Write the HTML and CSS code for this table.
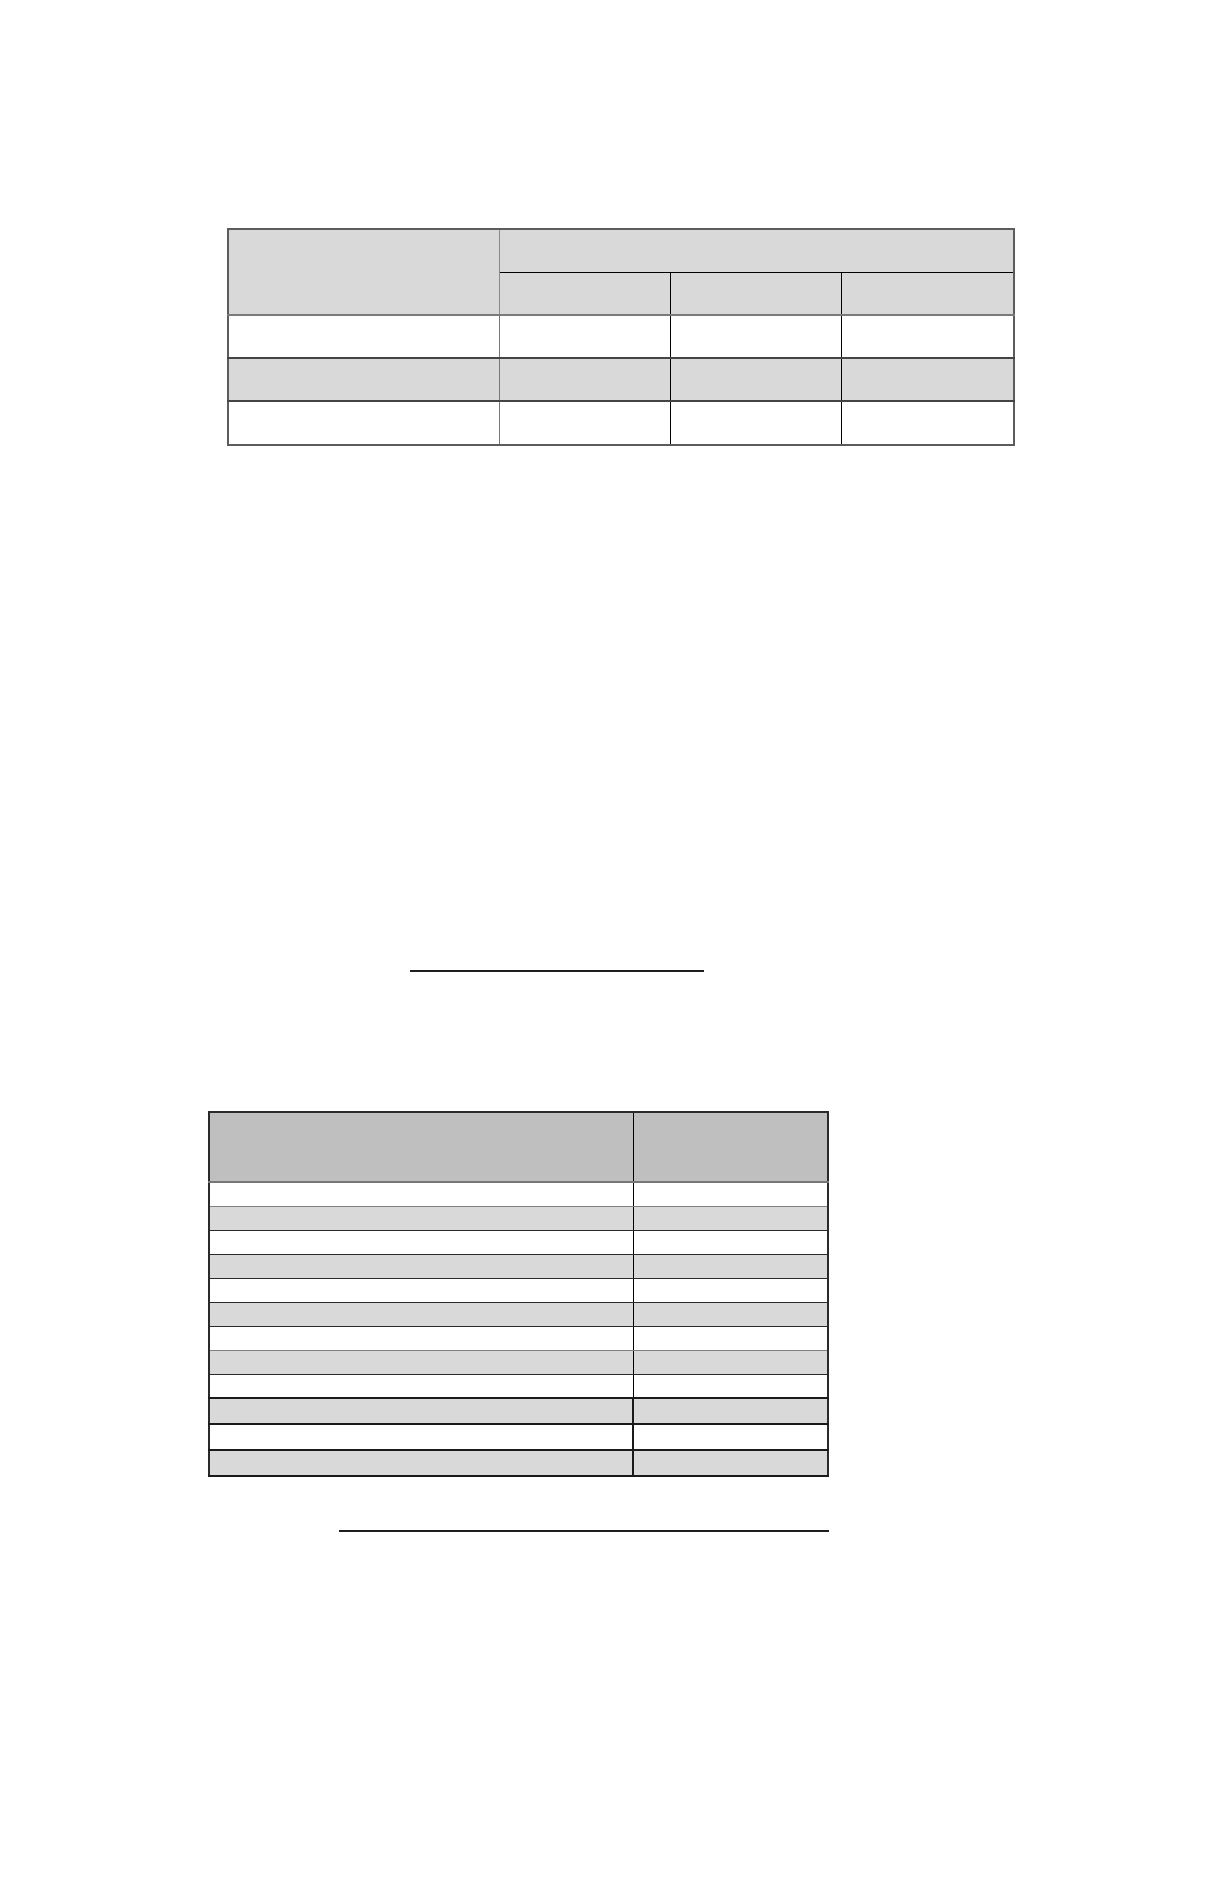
FILE: index.html
```html
<!DOCTYPE html>
<html lang="en">
<head>
<meta charset="utf-8">
<title>Tables</title>
<link rel="stylesheet" href="styles.css">
</head>
<body>
<div class="page">
  <table class="t1">
    <colgroup>
      <col class="w1"><col class="w2"><col class="w2"><col class="w3">
    </colgroup>
    <tr class="h1">
      <td class="hc1" rowspan="2"></td>
      <td class="hspan" colspan="3"></td>
    </tr>
    <tr class="h2">
      <td class="sub"></td><td class="sub"></td><td class="sub last"></td>
    </tr>
    <tr class="r white">
      <td class="c1"></td><td></td><td></td><td></td>
    </tr>
    <tr class="r grey">
      <td class="c1"></td><td></td><td></td><td></td>
    </tr>
    <tr class="r white rlast">
      <td class="c1"></td><td></td><td></td><td></td>
    </tr>
  </table>

  <div class="rule rule1"></div>

  <table class="t2">
    <colgroup>
      <col class="v1"><col class="v2">
    </colgroup>
    <tr class="th"><td></td><td></td></tr>
    <tr class="s white lg"><td></td><td></td></tr>
    <tr class="s grey dk"><td></td><td></td></tr>
    <tr class="s white dk"><td></td><td></td></tr>
    <tr class="s grey dk"><td></td><td></td></tr>
    <tr class="s white dk"><td></td><td></td></tr>
    <tr class="s grey dk"><td></td><td></td></tr>
    <tr class="s white lg"><td></td><td></td></tr>
    <tr class="s grey dk"><td></td><td></td></tr>
    <tr class="s white lg"><td></td><td></td></tr>
    <tr class="b grey"><td></td><td></td></tr>
    <tr class="b white"><td></td><td></td></tr>
    <tr class="b grey"><td></td><td></td></tr>
  </table>

  <div class="rule rule2"></div>
</div>
</body>
</html>
```

FILE: styles.css
```css
html, body {
  margin: 0;
  padding: 0;
  background: #ffffff;
  font-family: "Liberation Sans", Arial, sans-serif;
}

.page {
  box-sizing: border-box;
  height: 1882px;
  padding-top: 228px;
  overflow: hidden;
}

/* ---------- table 1 ---------- */
.t1 {
  margin-left: 227px;
  width: 786px;
  border-collapse: collapse;
  table-layout: fixed;
  border: 2px solid #5c5c5c;
}
.t1 .w1 { width: 271px; }
.t1 .w2 { width: 171px; }
.t1 .w3 { width: 173px; }

.t1 td {
  padding: 0;
  border: 1px solid #000;
}
.t1 .h1, .t1 .h2 { background: #d9d9d9; }
.t1 .h1 { height: 43px; }
.t1 .h2 { height: 43px; }
.t1 .hc1 {
  border-right: 1px solid #8a8a8a;
  border-bottom: 2px solid #7a7a7a;
}
.t1 .hspan {
  border-bottom: 1px solid #000;
}
.t1 .sub {
  border-left: 1px solid #555;
  border-bottom: 2px solid #7a7a7a;
}
.t1 .r { height: 43px; }
.t1 .r td {
  border-bottom: 2px solid #444;
}
.t1 .r .c1 { border-right: 1px solid #777; }
.t1 .rlast { height: 44px; }
.t1 .rlast td { border-bottom: 2px solid #5c5c5c; }

.white { background: #ffffff; }
.grey { background: #d9d9d9; }

/* ---------- rules ---------- */
.rule {
  height: 2px;
  background: #1e1e1e;
}
.rule1 {
  margin-top: 524px;
  margin-left: 410px;
  width: 294px;
}
.rule2 {
  margin-top: 53px;
  margin-left: 339px;
  width: 490px;
}

/* ---------- table 2 ---------- */
.t2 {
  margin-top: 139px;
  margin-left: 208px;
  width: 619px;
  border-collapse: collapse;
  table-layout: fixed;
  border: 2px solid #2a2a2a;
}
.t2 .v1 { width: 424px; }
.t2 .v2 { width: 195px; }

.t2 td {
  padding: 0;
  border: 1px solid #111;
}
.t2 td:first-child { border-right: 1px solid #000; }
.t2 .th { height: 70px; background: #bfbfbf; }
.t2 .th td { border-bottom: 2px solid #777; }
.t2 .s { height: 24px; }
.t2 .lg td { border-bottom: 1px solid #808080; }
.t2 .dk td { border-bottom: 1px solid #2a2a2a; }
.t2 .b { height: 26px; }
.t2 .b td { border-top: 2px solid #1a1a1a; border-bottom: 2px solid #1a1a1a; }
.t2 .b td:first-child { border-right: 2px solid #1a1a1a; }
```
